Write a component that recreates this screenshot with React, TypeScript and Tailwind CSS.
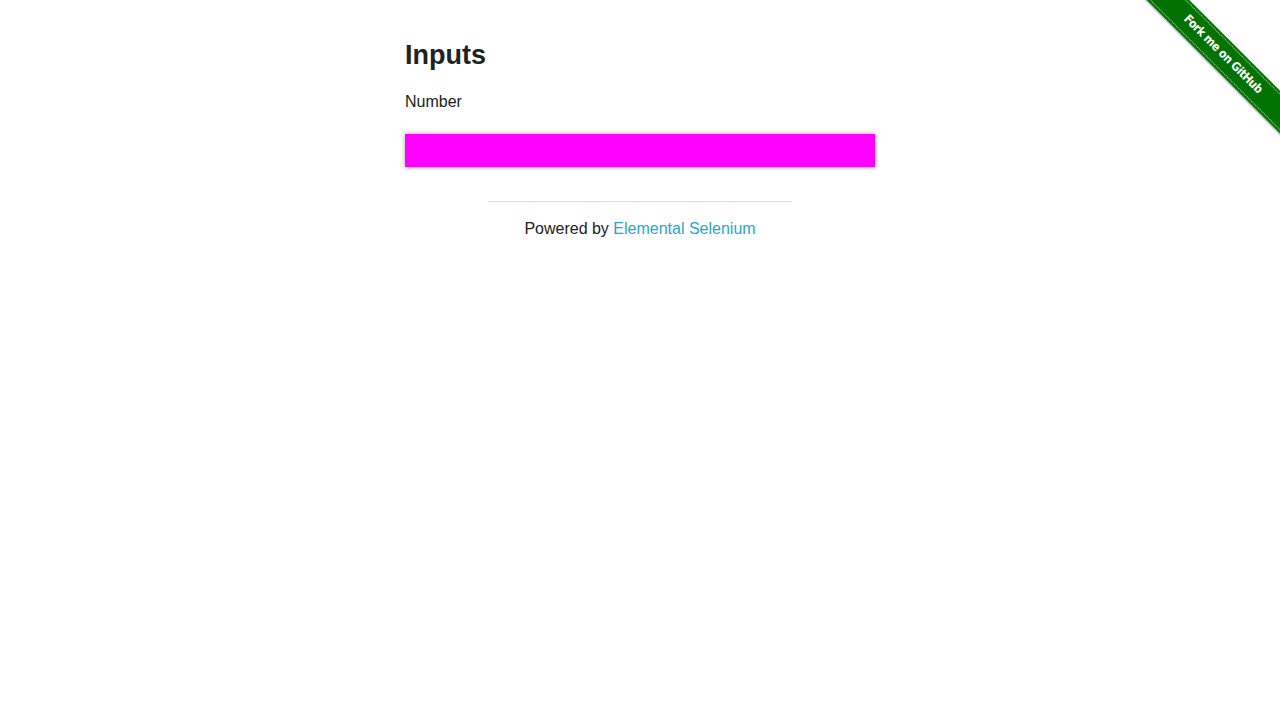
export default function App() {
  return (
    <div className="relative min-h-[720px] w-full bg-white text-[#222222] font-['Liberation_Sans',Arial,sans-serif]">
      <div className="absolute top-0 right-0 w-[149px] h-[149px] overflow-hidden">
        <div className="absolute left-[-17px] top-[41px] w-[220px] h-[30px] rotate-45 bg-[#007200] flex items-center justify-center shadow-[0_1px_2px_rgba(0,0,0,0.4)]">
          <div className="absolute left-0 right-0 top-[2px] border-t border-dotted border-white/70" />
          <div className="absolute left-0 right-0 bottom-[2px] border-b border-dotted border-white/70" />
          <span className="text-white font-bold text-[12px] tracking-[-0.5px] leading-none font-stretch-condensed font-['DejaVu_Sans_Condensed','DejaVu_Sans',sans-serif] -translate-y-[1px] -translate-x-[2px]">
            Fork me on GitHub
          </span>
        </div>
      </div>

      <main className="mx-auto w-[470px] pt-[39px] flex flex-col">
        <h3 className="text-[27px] font-bold leading-[32px]">Inputs</h3>
        <p className="text-[16px] leading-[20px] mt-[21px]">Number</p>
        <input
          type="number"
          className="mt-[22px] block w-[470px] h-[33px] bg-[#ff00ff] shadow-[0_0_5px_rgba(0,0,0,0.35)] outline-none border-0"
        />
      </main>

      <footer className="flex flex-col items-center mt-[34px] gap-[17px]">
        <hr className="w-[304px] border-0 border-t border-[#dddddd]" />
        <div className="text-center text-[16px] leading-[20px]">
          Powered by <a className="text-[#2ba6cb]">Elemental Selenium</a>
        </div>
      </footer>
    </div>
  );
}
